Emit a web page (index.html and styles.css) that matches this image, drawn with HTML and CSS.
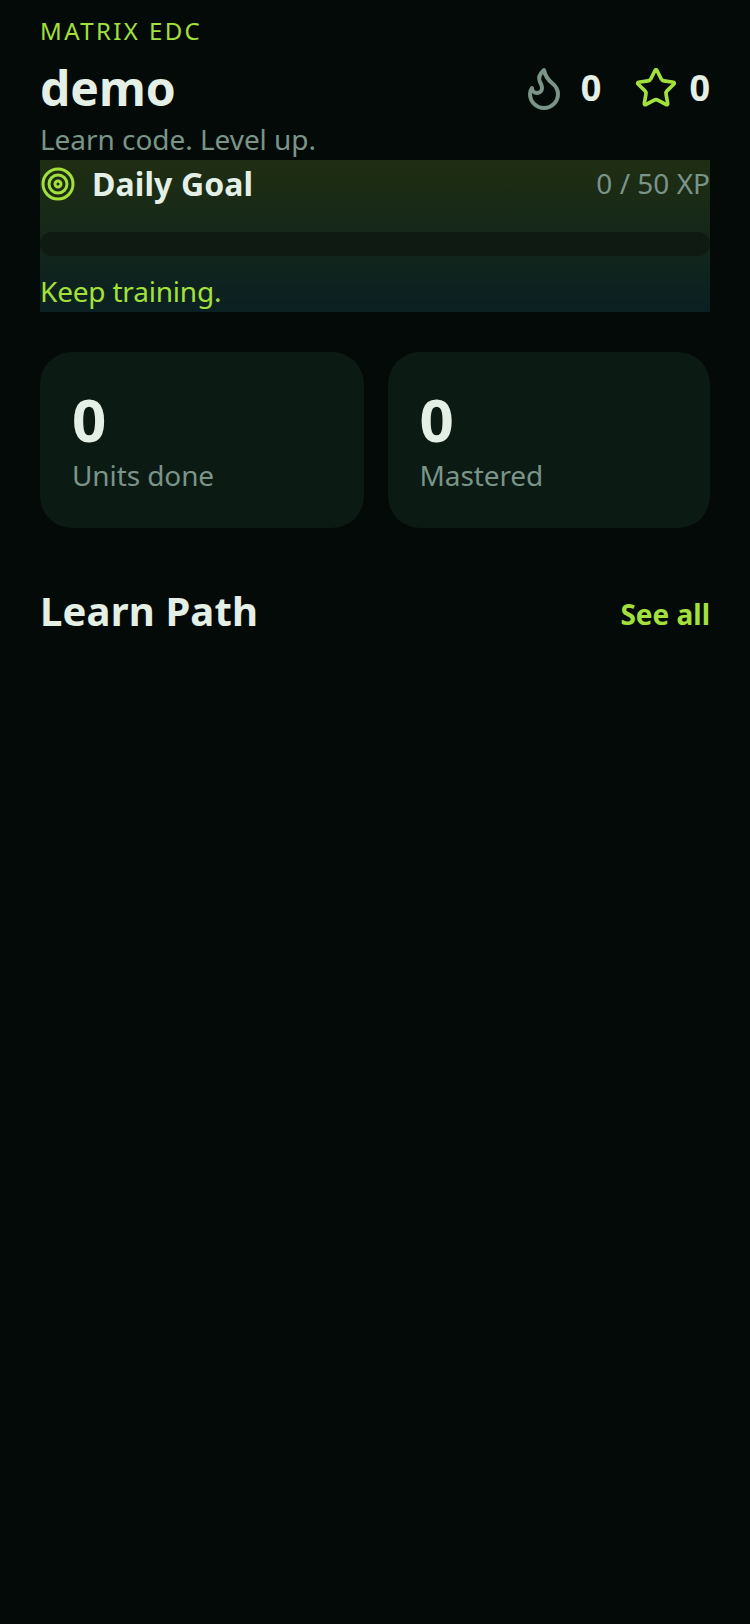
FILE: index.html
```html
<!DOCTYPE html>
<html lang="en">
<head>
    <meta charset="UTF-8">
    <meta name="viewport" content="width=device-width, initial-scale=1.0">
    <title>Matrix EDC</title>
    <link rel="stylesheet" href="styles.css">
</head>
<body>
    <div class="page">
        <div class="brand">MATRIX EDC</div>
        <div class="user-row">
            <h1 class="user-name">demo</h1>
            <div class="counters">
                <div class="counter">
                    <svg class="icon-flame" viewBox="0 0 24 24"><path d="M8.5 14.5A2.5 2.5 0 0 0 11 12c0-1.38-.5-2-1-3-1.072-2.143-.224-4.054 2-6 .5 2.5 2 4.9 4 6.5 2 1.6 3 3.5 3 5.5a7 7 0 1 1-14 0c0-1.153.433-2.294 1-3a2.5 2.5 0 0 0 2.5 2.5z"/></svg>
                    <span>0</span>
                </div>
                <div class="counter">
                    <svg class="icon-star" viewBox="0 0 24 24"><path d="M11.525 2.295a.53.53 0 0 1 .95 0l2.31 4.679a2.123 2.123 0 0 0 1.595 1.16l5.166.756a.53.53 0 0 1 .294.904l-3.736 3.638a2.123 2.123 0 0 0-.611 1.878l.882 5.14a.53.53 0 0 1-.771.56l-4.618-2.428a2.122 2.122 0 0 0-1.973 0L6.396 21.01a.53.53 0 0 1-.77-.56l.881-5.139a2.122 2.122 0 0 0-.611-1.879L2.16 9.795a.53.53 0 0 1 .294-.906l5.165-.755a2.122 2.122 0 0 0 1.597-1.16z"/></svg>
                    <span>0</span>
                </div>
            </div>
        </div>
        <div class="tagline">Learn code. Level up.</div>

        <div class="goal">
            <div class="goal-head">
                <div class="goal-title">
                    <svg class="icon-target" viewBox="0 0 24 24"><circle cx="12" cy="12" r="10"/><circle cx="12" cy="12" r="6"/><circle cx="12" cy="12" r="2"/></svg>
                    <span class="goal-name">Daily Goal</span>
                </div>
                <div class="goal-xp">0 / 50 XP</div>
            </div>
            <div class="goal-bar"></div>
            <div class="goal-note">Keep training.</div>
        </div>

        <div class="stats">
            <div class="stat">
                <div class="stat-value">0</div>
                <div class="stat-label">Units done</div>
            </div>
            <div class="stat">
                <div class="stat-value">0</div>
                <div class="stat-label">Mastered</div>
            </div>
        </div>

        <div class="section-head">
            <h2 class="section-title">Learn Path</h2>
            <div class="section-link">See all</div>
        </div>
    </div>
</body>
</html>
```

FILE: styles.css
```css
body {
    margin: 0;
    min-height: 1624px;
    background-color: #040a08;
    color: #e4f0e6;
    font-family: "Noto Sans", sans-serif;
}

h1, h2 {
    margin: 0;
}

.page {
    padding: 14px 40px 0;
}

.brand {
    font-size: 24px;
    line-height: 34px;
    letter-spacing: 2.4px;
    color: #a3e03c;
}

.user-row {
    display: flex;
    justify-content: space-between;
    align-items: center;
    margin-top: 7px;
}

.user-name {
    font-size: 48px;
    line-height: 66px;
    font-weight: 700;
}

.counters {
    display: flex;
    align-items: center;
    gap: 33px;
}

.counter {
    display: flex;
    align-items: center;
    gap: 12px;
    font-size: 36px;
    line-height: 48px;
    font-weight: 700;
}

.icon-flame,
.icon-star {
    fill: none;
    stroke-width: 2;
    stroke-linecap: round;
    stroke-linejoin: round;
}

.icon-flame {
    width: 48px;
    height: 48px;
    margin-right: 1px;
    stroke: #7a9488;
}

.icon-star {
    width: 44px;
    height: 44px;
    margin-right: -1px;
    stroke: #a3e03c;
}

.tagline {
    font-size: 28px;
    line-height: 37px;
    margin-bottom: 2px;
    letter-spacing: -0.05px;
    color: #7a9488;
}

.goal {
    height: 152px;
    background: linear-gradient(180deg, #1f2e12, #0a2022);
}

.goal-head {
    display: flex;
    justify-content: space-between;
    align-items: center;
    height: 48px;
}

.goal-title {
    display: flex;
    align-items: center;
    gap: 16px;
    font-size: 32px;
    font-weight: 700;
    letter-spacing: 0.1px;
}

.goal-name {
    padding-bottom: 2px;
}

.icon-target {
    width: 36px;
    height: 36px;
    fill: none;
    stroke: #a3e03c;
    stroke-width: 2;
}

.goal-xp {
    padding-bottom: 2px;
    font-size: 28px;
    color: #7a9488;
}

.goal-bar {
    height: 24px;
    margin-top: 24px;
    border-radius: 12px;
    background-color: #0f1a12;
}

.goal-note {
    margin-top: 16px;
    font-size: 28px;
    line-height: 38px;
    letter-spacing: -0.2px;
    color: #a3e03c;
}

.stats {
    display: grid;
    grid-template-columns: 1fr 322.5px;
    gap: 24px;
    margin-top: 40px;
}

.stat {
    height: 176px;
    padding: 29px 32px;
    border-radius: 32px;
    box-sizing: border-box;
    background-color: #0c1a14;
}

.stat-value {
    margin-bottom: -1px;
    font-size: 60px;
    line-height: 76px;
    font-weight: 700;
}

.stat-label {
    font-size: 28px;
    line-height: 38px;
    letter-spacing: -0.1px;
    color: #7a9488;
}

.section-head {
    display: flex;
    justify-content: space-between;
    align-items: flex-start;
    margin-top: 55px;
}

.section-title {
    font-size: 40px;
    line-height: 56px;
    font-weight: 700;
    letter-spacing: 0.15px;
}

.section-link {
    margin-top: 3px;
    font-size: 28px;
    line-height: 56px;
    font-weight: 700;
    color: #a3e03c;
}
```
